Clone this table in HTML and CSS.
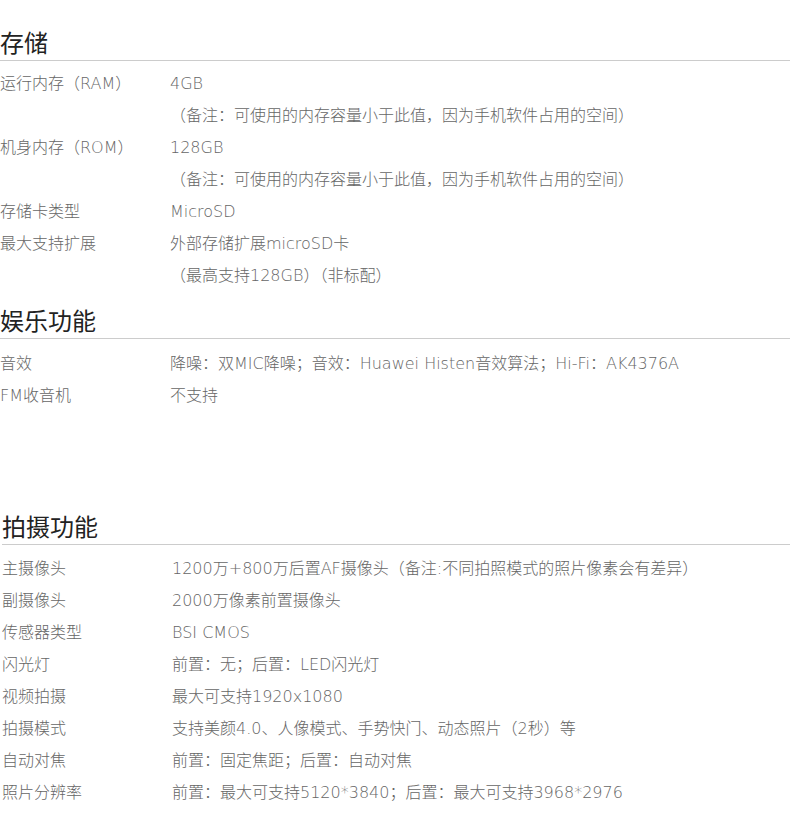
FILE: index.html
```html
<!DOCTYPE html>
<html lang="zh-CN">
  <head>
    <meta charset="UTF-8" />
    <meta name="viewport" content="width=device-width, initial-scale=1.0" />
    <title>规格参数</title>
    <link rel="stylesheet" href="styles.css">
  </head>
  <body>
    <div class="spec">
      <div class="group first">
        <h2 class="group-title">存储</h2>
        <div class="rows">
          <div class="row"><span class="label">运行内存（RAM）</span><span class="value">4GB</span></div>
          <div class="row"><span class="label"></span><span class="value">（备注：可使用的内存容量小于此值，因为手机软件占用的空间）</span></div>
          <div class="row"><span class="label">机身内存（ROM）</span><span class="value">128GB</span></div>
          <div class="row"><span class="label"></span><span class="value">（备注：可使用的内存容量小于此值，因为手机软件占用的空间）</span></div>
          <div class="row"><span class="label">存储卡类型</span><span class="value">MicroSD</span></div>
          <div class="row"><span class="label">最大支持扩展</span><span class="value">外部存储扩展microSD卡</span></div>
          <div class="row"><span class="label"></span><span class="value">（最高支持128GB）（非标配）</span></div>
        </div>
      </div>

      <div class="group">
        <h2 class="group-title">娱乐功能</h2>
        <div class="rows">
          <div class="row"><span class="label">音效</span><span class="value">降噪：双MIC降噪；音效：Huawei Histen音效算法；Hi-Fi：AK4376A</span></div>
          <div class="row"><span class="label">FM收音机</span><span class="value">不支持</span></div>
        </div>
      </div>

      <div class="group camera">
        <h2 class="group-title">拍摄功能</h2>
        <div class="rows">
          <div class="row"><span class="label">主摄像头</span><span class="value">1200万+800万后置AF摄像头（备注:不同拍照模式的照片像素会有差异）</span></div>
          <div class="row"><span class="label">副摄像头</span><span class="value">2000万像素前置摄像头</span></div>
          <div class="row"><span class="label">传感器类型</span><span class="value">BSI CMOS</span></div>
          <div class="row"><span class="label">闪光灯</span><span class="value">前置：无；后置：LED闪光灯</span></div>
          <div class="row"><span class="label">视频拍摄</span><span class="value">最大可支持1920x1080</span></div>
          <div class="row"><span class="label">拍摄模式</span><span class="value">支持美颜4.0、人像模式、手势快门、动态照片（2秒）等</span></div>
          <div class="row"><span class="label">自动对焦</span><span class="value">前置：固定焦距；后置：自动对焦</span></div>
          <div class="row"><span class="label">照片分辨率</span><span class="value">前置：最大可支持5120*3840；后置：最大可支持3968*2976</span></div>
        </div>
      </div>
    </div>
  </body>
</html>
```

FILE: styles.css
```css
body {
  font-family: "DejaVu Sans", "Noto Sans CJK SC", sans-serif;
  background-color: #fff;
  margin: 0;
  padding: 0;
}
.spec {
  width: 790px;
  padding-top: 14px;
}
.group-title {
  margin: 0;
  padding-top: 9px;
  font-family: "Noto Sans CJK SC", sans-serif;
  font-size: 24px;
  font-weight: 400;
  line-height: 37px;
  color: #222;
  border-bottom: 1px solid #ccc;
}
.rows {
  padding-top: 9px;
}
.first .rows {
  padding-top: 7px;
}
.row {
  display: flex;
  height: 32px;
  line-height: 32px;
  font-size: 16px;
  font-weight: 200;
  color: #666;
}
.label {
  width: 170px;
  flex-shrink: 0;
}
.value {
  white-space: nowrap;
}
.camera {
  margin-top: 86px;
  padding-left: 2px;
}
.camera .rows {
  padding-top: 8px;
}
```
